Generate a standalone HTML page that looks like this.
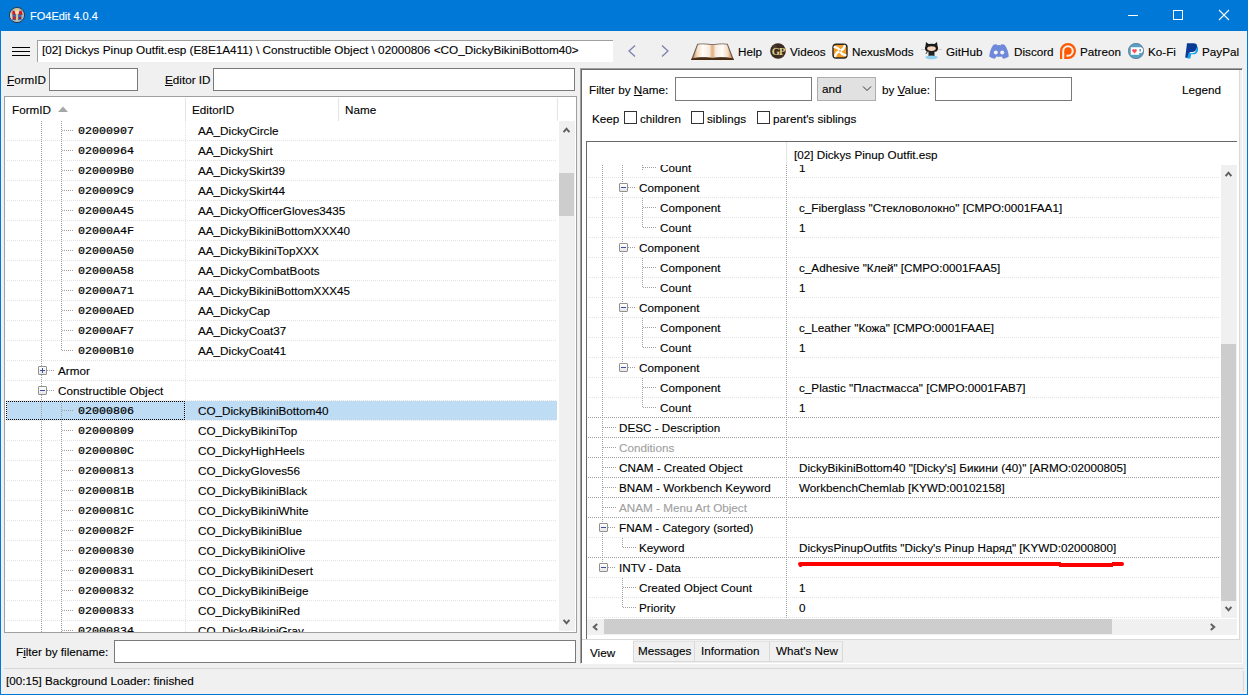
<!DOCTYPE html><html><head><meta charset="utf-8"><style>
html,body{margin:0;padding:0;}
body{width:1248px;height:695px;position:relative;overflow:hidden;background:#f0f0f0;font-family:"Liberation Sans",sans-serif;font-size:11.5px;}
.t{position:absolute;white-space:nowrap;line-height:0;height:0;}
.t span{position:relative;display:inline-block;line-height:0;}
.t span{-webkit-text-stroke:0.12px currentColor;}
.m span{-webkit-text-stroke:0.22px currentColor;}
u{text-decoration:underline;text-underline-offset:1px;}
</style></head><body><div style="position:absolute;left:0px;top:0px;width:1248px;height:31px;background:#0078d7"></div>
<div style="position:absolute;left:0px;top:0px;width:1px;height:695px;background:#0078d7"></div>
<div style="position:absolute;left:1247px;top:0px;width:1px;height:695px;background:#0078d7"></div>
<div style="position:absolute;left:0px;top:694px;width:1248px;height:1px;background:#0078d7"></div>
<svg style="position:absolute;left:9px;top:7px" width="16" height="16" viewBox="0 0 16 16">
<circle cx="8" cy="8" r="7.6" fill="#aab6bd" stroke="#2b3240" stroke-width="0.9"/>
<path d="M2 6.5Q1.5 9.5 3 12" stroke="#e8d8b8" stroke-width="1.6" fill="none"/>
<rect x="3.5" y="7" width="9" height="6" fill="#3c6fb5"/>
<path d="M3.5 3.5L6 4.5L6.2 8L3.5 7.5Z" fill="#e01515"/><path d="M10 4.5L12.5 3.5L13.5 8L10 7.5Z" fill="#e01515"/>
<path d="M4 9.5H6.5V12.5H4Z" fill="#e01515"/><path d="M10 10H12V12H10Z" fill="#c01010"/>
<rect x="7.2" y="6.5" width="1.6" height="7" fill="#f0e090"/>
<ellipse cx="8" cy="4.8" rx="2" ry="2.3" fill="#f3dcc0"/><ellipse cx="8" cy="2.6" rx="2.1" ry="1.2" fill="#e8d070"/>
</svg>
<div class="t" style="left:30px;top:16px;color:#fff;font-size:11px;font-family:'Liberation Sans', sans-serif;"><span>FO4Edit 4.0.4</span></div>
<div style="position:absolute;left:1128px;top:15px;width:10px;height:1px;background:#fff"></div>
<div style="position:absolute;left:1173px;top:10px;width:10px;height:10px;box-sizing:border-box;border:1px solid #fff"></div>
<svg style="position:absolute;left:1218px;top:9px" width="12" height="12" viewBox="0 0 12 12"><path d="M1 1L11 11M11 1L1 11" stroke="#fff" stroke-width="1.1"/></svg>
<div style="position:absolute;left:12px;top:47px;width:18px;height:1px;background:#000"></div>
<div style="position:absolute;left:12px;top:51px;width:18px;height:1px;background:#000"></div>
<div style="position:absolute;left:12px;top:55px;width:18px;height:1px;background:#000"></div>
<div style="position:absolute;left:37px;top:40px;width:576px;height:22px;background:#fff;border-top:1px solid #a0a0a0;border-left:1px solid #a0a0a0;box-sizing:border-box"></div>
<div class="t" style="left:42px;top:50px;color:#000;font-size:11.75px;font-family:'Liberation Sans', sans-serif;"><span>[02] Dickys Pinup Outfit.esp (E8E1A411) \ Constructible Object \ 02000806 &lt;CO_DickyBikiniBottom40&gt;</span></div>
<svg style="position:absolute;left:626px;top:44px" width="48" height="14" viewBox="0 0 48 14"><path d="M9 1.5L3 7L9 12.5" fill="none" stroke="#7d7fae" stroke-width="1.3"/><path d="M36 1.5L42 7L36 12.5" fill="none" stroke="#7d7fae" stroke-width="1.3"/></svg>
<svg style="position:absolute;left:691px;top:43px" width="43" height="17" viewBox="0 0 43 17">
<defs><linearGradient id="lp" x1="0" x2="1" y1="0" y2="0"><stop offset="0" stop-color="#d98f50"/><stop offset="0.22" stop-color="#f3dcc4"/><stop offset="0.5" stop-color="#fffcf8"/><stop offset="0.85" stop-color="#f7ece2"/><stop offset="1" stop-color="#e2b890"/></linearGradient>
<linearGradient id="rp" x1="1" x2="0" y1="0" y2="0"><stop offset="0" stop-color="#d98f50"/><stop offset="0.22" stop-color="#f3dcc4"/><stop offset="0.5" stop-color="#fffcf8"/><stop offset="0.85" stop-color="#f7ece2"/><stop offset="1" stop-color="#e2b890"/></linearGradient></defs>
<path d="M6.3 0.8Q14 -0.2 21.5 1.2Q29 -0.2 36.7 0.8L43 16.9H0Z" fill="#6a5a50"/>
<path d="M7 1.5Q14 0.8 21 2.1V14.4Q12 13.4 2.2 14.9Z" fill="url(#lp)"/>
<path d="M36 1.5Q29 0.8 22 2.1V14.4Q31 13.4 40.8 14.9Z" fill="url(#rp)"/>
<path d="M0.8 15.4Q11 13.9 21.5 15.3Q32 13.9 42.2 15.4L43 16.9H0Z" fill="#4a2c14"/>
<path d="M20.6 2.2Q21.5 1.6 22.4 2.2V14.8H20.6Z" fill="#e7b686"/>
</svg>
<div class="t" style="left:738px;top:52px;color:#000;font-size:11.7px;font-family:'Liberation Sans', sans-serif;"><span>Help</span></div>
<svg style="position:absolute;left:770px;top:43px" width="16" height="16" viewBox="0 0 16 16"><circle cx="8" cy="8" r="7.8" fill="#3a2a22"/><circle cx="5" cy="4" r="2" fill="#5a4030" opacity="0.7"/><circle cx="11" cy="12" r="2.5" fill="#4a3a2a" opacity="0.6"/><text x="8.2" y="11.9" font-family="Liberation Serif" font-size="10.5" font-weight="bold" fill="#e6d48a" text-anchor="middle" letter-spacing="-0.9">GP</text></svg>
<div class="t" style="left:790px;top:52px;color:#000;font-size:11.7px;font-family:'Liberation Sans', sans-serif;"><span>Videos</span></div>
<svg style="position:absolute;left:832px;top:43px" width="16" height="16" viewBox="0 0 16 16"><rect x="1" y="1.2" width="14" height="13.8" rx="3" fill="#f59e25" stroke="#2a2420" stroke-width="1.4"/>
<path d="M2.6 4.2Q6.5 4.5 7.6 7.6M12.6 2.8Q12 6.6 8.4 7.6M13.4 12.2Q9.5 11.8 8.4 8.4M3.2 13.2Q3.8 9.4 7.6 8.4" fill="none" stroke="#fff" stroke-width="2.3" stroke-linecap="round"/><circle cx="8" cy="8" r="0.9" fill="#f59e25"/></svg>
<div class="t" style="left:852px;top:52px;color:#000;font-size:11.7px;font-family:'Liberation Sans', sans-serif;"><span>NexusMods</span></div>
<svg style="position:absolute;left:920px;top:41px" width="23" height="19" viewBox="0 0 23 19">
<path d="M1 8.5H5M18 8.5H22" stroke="#c8c8c8" stroke-width="0.8"/>
<path d="M6 1L8.5 3Q11.5 2.3 14.5 3L17 1L17.5 5Q19 8 16.5 10.5Q11.5 12 6.5 10.5Q4 8 5.5 5Z" fill="#1a1a1a"/>
<ellipse cx="11.5" cy="7.6" rx="4.3" ry="2.3" fill="#f6d2b8"/>
<path d="M8.5 10.5H14.5V15.5H8.5Z" fill="#222"/><path d="M9 10Q6 11 6 13" stroke="#444" stroke-width="1" fill="none"/>
<ellipse cx="11.5" cy="16.3" rx="6.2" ry="1.9" fill="#8fd0f0"/>
</svg>
<div class="t" style="left:946px;top:52px;color:#000;font-size:11.7px;font-family:'Liberation Sans', sans-serif;"><span>GitHub</span></div>
<svg style="position:absolute;left:989px;top:44px" width="20" height="15" viewBox="0 0 20 15"><path d="M4.5 0.8Q7 0 8 0.6L8.3 1.2Q10 1 11.7 1.2L12 0.6Q13 0 15.5 0.8Q19 5 19.8 12.5Q17.5 14.5 14 14.8L12.8 12.5Q10 13.2 7.2 12.5L6 14.8Q2.5 14.5 0.2 12.5Q1 5 4.5 0.8Z" fill="#6e88da"/><circle cx="6.8" cy="8.4" r="2" fill="#f4f4f4"/><circle cx="13.2" cy="8.4" r="2" fill="#f4f4f4"/></svg>
<div class="t" style="left:1014px;top:52px;color:#000;font-size:11.7px;font-family:'Liberation Sans', sans-serif;"><span>Discord</span></div>
<svg style="position:absolute;left:1059px;top:42px" width="18" height="18" viewBox="0 0 18 18"><path d="M2.1 17V9A6.9 6.9 0 1 1 9 15.9H5.5" fill="none" stroke="#ff5900" stroke-width="2.2"/><circle cx="9" cy="9" r="3.7" fill="#ff5900"/><rect x="5.3" y="9" width="2.2" height="8" fill="#ff5900"/></svg>
<div class="t" style="left:1080px;top:52px;color:#000;font-size:11.7px;font-family:'Liberation Sans', sans-serif;"><span>Patreon</span></div>
<svg style="position:absolute;left:1128px;top:43px" width="16" height="16" viewBox="0 0 16 16"><circle cx="8" cy="8" r="7.7" fill="#59a0c6" stroke="#506070" stroke-width="0.6"/><path d="M2.8 4.3H12.5Q15 4.3 15 7.2Q15 10 12.3 10H11.2V11.8H2.8Z" fill="#fff"/><rect x="11.4" y="6" width="1.6" height="2.5" fill="#59a0c6"/><path d="M6.5 10.5L4.4 8.2Q3.5 6.8 4.8 6.2Q6 5.8 6.5 6.9Q7 5.8 8.2 6.2Q9.5 6.8 8.6 8.2Z" fill="#ff4e5c"/></svg>
<div class="t" style="left:1148px;top:52px;color:#000;font-size:11.7px;font-family:'Liberation Sans', sans-serif;"><span>Ko-Fi</span></div>
<svg style="position:absolute;left:1185px;top:43px" width="14" height="16" viewBox="0 0 14 16"><path d="M2 0.3H8.3Q12.8 0.3 12 4.6Q11.2 9 6.8 9H4.8L3.8 14.8H0.2Z" fill="#0a3a96"/><path d="M12.1 3.2Q13.7 4.5 13 7.4Q12 11.3 7.8 11.3H6.2L5.3 15.6H2.3L3.4 10.3H6.9Q11.5 10.3 12.1 3.2Z" fill="#0ea3e6"/></svg>
<div class="t" style="left:1202px;top:52px;color:#000;font-size:11.7px;font-family:'Liberation Sans', sans-serif;"><span>PayPal</span></div>
<div class="t" style="left:7px;top:80px;color:#000;font-size:11.7px;font-family:'Liberation Sans', sans-serif;"><span><u>F</u>ormID</span></div>
<div style="position:absolute;left:49px;top:68px;width:89px;height:23px;box-sizing:border-box;background:#fff;border:1px solid #7a7a7a"></div>
<div class="t" style="left:165px;top:80px;color:#000;font-size:11.7px;font-family:'Liberation Sans', sans-serif;"><span><u>E</u>ditor ID</span></div>
<div style="position:absolute;left:213px;top:68px;width:362px;height:23px;box-sizing:border-box;background:#fff;border:1px solid #7a7a7a"></div>
<div style="position:absolute;left:4px;top:96px;width:573px;height:537px;box-sizing:border-box;background:#fff;border:1px solid #a0a0a0"></div>
<div class="t" style="left:12px;top:110px;color:#000;font-size:11.7px;font-family:'Liberation Sans', sans-serif;"><span>FormID</span></div>
<svg style="position:absolute;left:58px;top:106px" width="10" height="6" viewBox="0 0 10 6"><path d="M0 6L5 0.5L10 6Z" fill="#a7a7a7"/></svg>
<div style="position:absolute;left:185px;top:98px;width:1px;height:23px;background:#e5e5e5"></div>
<div class="t" style="left:192px;top:110px;color:#000;font-size:11.7px;font-family:'Liberation Sans', sans-serif;"><span>EditorID</span></div>
<div style="position:absolute;left:338px;top:98px;width:1px;height:23px;background:#e5e5e5"></div>
<div class="t" style="left:345px;top:110px;color:#000;font-size:11.7px;font-family:'Liberation Sans', sans-serif;"><span>Name</span></div>
<div style="position:absolute;left:557px;top:98px;width:1px;height:23px;background:#e5e5e5"></div>
<div style="position:absolute;left:5px;top:121px;width:554px;height:511px;overflow:hidden">
<div style="position:absolute;left:2px;top:19px;width:550px;height:1px;background:repeating-linear-gradient(90deg,#e3e3e3 0 1px,transparent 1px 2px)"></div>
<div style="position:absolute;left:57px;top:9px;width:12px;height:1px;background:repeating-linear-gradient(90deg,#a0a0a0 0 1px,transparent 1px 2px)"></div>
<div class="t m" style="left:73px;top:10px;color:#000;font-size:11.7px;font-family:'Liberation Mono', monospace;"><span>02000907</span></div>
<div class="t" style="left:193px;top:10px;color:#000;font-size:11.7px;font-family:'Liberation Sans', sans-serif;"><span>AA_DickyCircle</span></div>
<div style="position:absolute;left:2px;top:39px;width:550px;height:1px;background:repeating-linear-gradient(90deg,#e3e3e3 0 1px,transparent 1px 2px)"></div>
<div style="position:absolute;left:57px;top:29px;width:12px;height:1px;background:repeating-linear-gradient(90deg,#a0a0a0 0 1px,transparent 1px 2px)"></div>
<div class="t m" style="left:73px;top:30px;color:#000;font-size:11.7px;font-family:'Liberation Mono', monospace;"><span>02000964</span></div>
<div class="t" style="left:193px;top:30px;color:#000;font-size:11.7px;font-family:'Liberation Sans', sans-serif;"><span>AA_DickyShirt</span></div>
<div style="position:absolute;left:2px;top:59px;width:550px;height:1px;background:repeating-linear-gradient(90deg,#e3e3e3 0 1px,transparent 1px 2px)"></div>
<div style="position:absolute;left:57px;top:49px;width:12px;height:1px;background:repeating-linear-gradient(90deg,#a0a0a0 0 1px,transparent 1px 2px)"></div>
<div class="t m" style="left:73px;top:50px;color:#000;font-size:11.7px;font-family:'Liberation Mono', monospace;"><span>020009B0</span></div>
<div class="t" style="left:193px;top:50px;color:#000;font-size:11.7px;font-family:'Liberation Sans', sans-serif;"><span>AA_DickySkirt39</span></div>
<div style="position:absolute;left:2px;top:79px;width:550px;height:1px;background:repeating-linear-gradient(90deg,#e3e3e3 0 1px,transparent 1px 2px)"></div>
<div style="position:absolute;left:57px;top:69px;width:12px;height:1px;background:repeating-linear-gradient(90deg,#a0a0a0 0 1px,transparent 1px 2px)"></div>
<div class="t m" style="left:73px;top:70px;color:#000;font-size:11.7px;font-family:'Liberation Mono', monospace;"><span>020009C9</span></div>
<div class="t" style="left:193px;top:70px;color:#000;font-size:11.7px;font-family:'Liberation Sans', sans-serif;"><span>AA_DickySkirt44</span></div>
<div style="position:absolute;left:2px;top:99px;width:550px;height:1px;background:repeating-linear-gradient(90deg,#e3e3e3 0 1px,transparent 1px 2px)"></div>
<div style="position:absolute;left:57px;top:89px;width:12px;height:1px;background:repeating-linear-gradient(90deg,#a0a0a0 0 1px,transparent 1px 2px)"></div>
<div class="t m" style="left:73px;top:90px;color:#000;font-size:11.7px;font-family:'Liberation Mono', monospace;"><span>02000A45</span></div>
<div class="t" style="left:193px;top:90px;color:#000;font-size:11.7px;font-family:'Liberation Sans', sans-serif;"><span>AA_DickyOfficerGloves3435</span></div>
<div style="position:absolute;left:2px;top:119px;width:550px;height:1px;background:repeating-linear-gradient(90deg,#e3e3e3 0 1px,transparent 1px 2px)"></div>
<div style="position:absolute;left:57px;top:109px;width:12px;height:1px;background:repeating-linear-gradient(90deg,#a0a0a0 0 1px,transparent 1px 2px)"></div>
<div class="t m" style="left:73px;top:110px;color:#000;font-size:11.7px;font-family:'Liberation Mono', monospace;"><span>02000A4F</span></div>
<div class="t" style="left:193px;top:110px;color:#000;font-size:11.7px;font-family:'Liberation Sans', sans-serif;"><span>AA_DickyBikiniBottomXXX40</span></div>
<div style="position:absolute;left:2px;top:139px;width:550px;height:1px;background:repeating-linear-gradient(90deg,#e3e3e3 0 1px,transparent 1px 2px)"></div>
<div style="position:absolute;left:57px;top:129px;width:12px;height:1px;background:repeating-linear-gradient(90deg,#a0a0a0 0 1px,transparent 1px 2px)"></div>
<div class="t m" style="left:73px;top:130px;color:#000;font-size:11.7px;font-family:'Liberation Mono', monospace;"><span>02000A50</span></div>
<div class="t" style="left:193px;top:130px;color:#000;font-size:11.7px;font-family:'Liberation Sans', sans-serif;"><span>AA_DickyBikiniTopXXX</span></div>
<div style="position:absolute;left:2px;top:159px;width:550px;height:1px;background:repeating-linear-gradient(90deg,#e3e3e3 0 1px,transparent 1px 2px)"></div>
<div style="position:absolute;left:57px;top:149px;width:12px;height:1px;background:repeating-linear-gradient(90deg,#a0a0a0 0 1px,transparent 1px 2px)"></div>
<div class="t m" style="left:73px;top:150px;color:#000;font-size:11.7px;font-family:'Liberation Mono', monospace;"><span>02000A58</span></div>
<div class="t" style="left:193px;top:150px;color:#000;font-size:11.7px;font-family:'Liberation Sans', sans-serif;"><span>AA_DickyCombatBoots</span></div>
<div style="position:absolute;left:2px;top:179px;width:550px;height:1px;background:repeating-linear-gradient(90deg,#e3e3e3 0 1px,transparent 1px 2px)"></div>
<div style="position:absolute;left:57px;top:169px;width:12px;height:1px;background:repeating-linear-gradient(90deg,#a0a0a0 0 1px,transparent 1px 2px)"></div>
<div class="t m" style="left:73px;top:170px;color:#000;font-size:11.7px;font-family:'Liberation Mono', monospace;"><span>02000A71</span></div>
<div class="t" style="left:193px;top:170px;color:#000;font-size:11.7px;font-family:'Liberation Sans', sans-serif;"><span>AA_DickyBikiniBottomXXX45</span></div>
<div style="position:absolute;left:2px;top:199px;width:550px;height:1px;background:repeating-linear-gradient(90deg,#e3e3e3 0 1px,transparent 1px 2px)"></div>
<div style="position:absolute;left:57px;top:189px;width:12px;height:1px;background:repeating-linear-gradient(90deg,#a0a0a0 0 1px,transparent 1px 2px)"></div>
<div class="t m" style="left:73px;top:190px;color:#000;font-size:11.7px;font-family:'Liberation Mono', monospace;"><span>02000AED</span></div>
<div class="t" style="left:193px;top:190px;color:#000;font-size:11.7px;font-family:'Liberation Sans', sans-serif;"><span>AA_DickyCap</span></div>
<div style="position:absolute;left:2px;top:219px;width:550px;height:1px;background:repeating-linear-gradient(90deg,#e3e3e3 0 1px,transparent 1px 2px)"></div>
<div style="position:absolute;left:57px;top:209px;width:12px;height:1px;background:repeating-linear-gradient(90deg,#a0a0a0 0 1px,transparent 1px 2px)"></div>
<div class="t m" style="left:73px;top:210px;color:#000;font-size:11.7px;font-family:'Liberation Mono', monospace;"><span>02000AF7</span></div>
<div class="t" style="left:193px;top:210px;color:#000;font-size:11.7px;font-family:'Liberation Sans', sans-serif;"><span>AA_DickyCoat37</span></div>
<div style="position:absolute;left:2px;top:239px;width:550px;height:1px;background:repeating-linear-gradient(90deg,#e3e3e3 0 1px,transparent 1px 2px)"></div>
<div style="position:absolute;left:57px;top:229px;width:12px;height:1px;background:repeating-linear-gradient(90deg,#a0a0a0 0 1px,transparent 1px 2px)"></div>
<div class="t m" style="left:73px;top:230px;color:#000;font-size:11.7px;font-family:'Liberation Mono', monospace;"><span>02000B10</span></div>
<div class="t" style="left:193px;top:230px;color:#000;font-size:11.7px;font-family:'Liberation Sans', sans-serif;"><span>AA_DickyCoat41</span></div>
<div style="position:absolute;left:2px;top:259px;width:550px;height:1px;background:repeating-linear-gradient(90deg,#e3e3e3 0 1px,transparent 1px 2px)"></div>
<div style="position:absolute;left:42px;top:249px;width:8px;height:1px;background:repeating-linear-gradient(90deg,#a0a0a0 0 1px,transparent 1px 2px)"></div>
<div class="t" style="left:53px;top:250px;color:#000;font-size:11.7px;font-family:'Liberation Sans', sans-serif;"><span>Armor</span></div>
<div style="position:absolute;left:2px;top:279px;width:550px;height:1px;background:repeating-linear-gradient(90deg,#e3e3e3 0 1px,transparent 1px 2px)"></div>
<div style="position:absolute;left:42px;top:269px;width:8px;height:1px;background:repeating-linear-gradient(90deg,#a0a0a0 0 1px,transparent 1px 2px)"></div>
<div class="t" style="left:53px;top:270px;color:#000;font-size:11.7px;font-family:'Liberation Sans', sans-serif;"><span>Constructible Object</span></div>
<div style="position:absolute;left:2px;top:280px;width:550px;height:19px;background:#bfdcf5"></div>
<div style="position:absolute;left:1px;top:280px;width:179px;height:19px;box-sizing:border-box;border:1px dotted #000"></div>
<div style="position:absolute;left:2px;top:299px;width:550px;height:1px;background:repeating-linear-gradient(90deg,#e3e3e3 0 1px,transparent 1px 2px)"></div>
<div style="position:absolute;left:57px;top:289px;width:12px;height:1px;background:repeating-linear-gradient(90deg,#a0a0a0 0 1px,transparent 1px 2px)"></div>
<div class="t m" style="left:73px;top:290px;color:#000;font-size:11.7px;font-family:'Liberation Mono', monospace;"><span>02000806</span></div>
<div class="t" style="left:193px;top:290px;color:#000;font-size:11.7px;font-family:'Liberation Sans', sans-serif;"><span>CO_DickyBikiniBottom40</span></div>
<div style="position:absolute;left:2px;top:319px;width:550px;height:1px;background:repeating-linear-gradient(90deg,#e3e3e3 0 1px,transparent 1px 2px)"></div>
<div style="position:absolute;left:57px;top:309px;width:12px;height:1px;background:repeating-linear-gradient(90deg,#a0a0a0 0 1px,transparent 1px 2px)"></div>
<div class="t m" style="left:73px;top:310px;color:#000;font-size:11.7px;font-family:'Liberation Mono', monospace;"><span>02000809</span></div>
<div class="t" style="left:193px;top:310px;color:#000;font-size:11.7px;font-family:'Liberation Sans', sans-serif;"><span>CO_DickyBikiniTop</span></div>
<div style="position:absolute;left:2px;top:339px;width:550px;height:1px;background:repeating-linear-gradient(90deg,#e3e3e3 0 1px,transparent 1px 2px)"></div>
<div style="position:absolute;left:57px;top:329px;width:12px;height:1px;background:repeating-linear-gradient(90deg,#a0a0a0 0 1px,transparent 1px 2px)"></div>
<div class="t m" style="left:73px;top:330px;color:#000;font-size:11.7px;font-family:'Liberation Mono', monospace;"><span>0200080C</span></div>
<div class="t" style="left:193px;top:330px;color:#000;font-size:11.7px;font-family:'Liberation Sans', sans-serif;"><span>CO_DickyHighHeels</span></div>
<div style="position:absolute;left:2px;top:359px;width:550px;height:1px;background:repeating-linear-gradient(90deg,#e3e3e3 0 1px,transparent 1px 2px)"></div>
<div style="position:absolute;left:57px;top:349px;width:12px;height:1px;background:repeating-linear-gradient(90deg,#a0a0a0 0 1px,transparent 1px 2px)"></div>
<div class="t m" style="left:73px;top:350px;color:#000;font-size:11.7px;font-family:'Liberation Mono', monospace;"><span>02000813</span></div>
<div class="t" style="left:193px;top:350px;color:#000;font-size:11.7px;font-family:'Liberation Sans', sans-serif;"><span>CO_DickyGloves56</span></div>
<div style="position:absolute;left:2px;top:379px;width:550px;height:1px;background:repeating-linear-gradient(90deg,#e3e3e3 0 1px,transparent 1px 2px)"></div>
<div style="position:absolute;left:57px;top:369px;width:12px;height:1px;background:repeating-linear-gradient(90deg,#a0a0a0 0 1px,transparent 1px 2px)"></div>
<div class="t m" style="left:73px;top:370px;color:#000;font-size:11.7px;font-family:'Liberation Mono', monospace;"><span>0200081B</span></div>
<div class="t" style="left:193px;top:370px;color:#000;font-size:11.7px;font-family:'Liberation Sans', sans-serif;"><span>CO_DickyBikiniBlack</span></div>
<div style="position:absolute;left:2px;top:399px;width:550px;height:1px;background:repeating-linear-gradient(90deg,#e3e3e3 0 1px,transparent 1px 2px)"></div>
<div style="position:absolute;left:57px;top:389px;width:12px;height:1px;background:repeating-linear-gradient(90deg,#a0a0a0 0 1px,transparent 1px 2px)"></div>
<div class="t m" style="left:73px;top:390px;color:#000;font-size:11.7px;font-family:'Liberation Mono', monospace;"><span>0200081C</span></div>
<div class="t" style="left:193px;top:390px;color:#000;font-size:11.7px;font-family:'Liberation Sans', sans-serif;"><span>CO_DickyBikiniWhite</span></div>
<div style="position:absolute;left:2px;top:419px;width:550px;height:1px;background:repeating-linear-gradient(90deg,#e3e3e3 0 1px,transparent 1px 2px)"></div>
<div style="position:absolute;left:57px;top:409px;width:12px;height:1px;background:repeating-linear-gradient(90deg,#a0a0a0 0 1px,transparent 1px 2px)"></div>
<div class="t m" style="left:73px;top:410px;color:#000;font-size:11.7px;font-family:'Liberation Mono', monospace;"><span>0200082F</span></div>
<div class="t" style="left:193px;top:410px;color:#000;font-size:11.7px;font-family:'Liberation Sans', sans-serif;"><span>CO_DickyBikiniBlue</span></div>
<div style="position:absolute;left:2px;top:439px;width:550px;height:1px;background:repeating-linear-gradient(90deg,#e3e3e3 0 1px,transparent 1px 2px)"></div>
<div style="position:absolute;left:57px;top:429px;width:12px;height:1px;background:repeating-linear-gradient(90deg,#a0a0a0 0 1px,transparent 1px 2px)"></div>
<div class="t m" style="left:73px;top:430px;color:#000;font-size:11.7px;font-family:'Liberation Mono', monospace;"><span>02000830</span></div>
<div class="t" style="left:193px;top:430px;color:#000;font-size:11.7px;font-family:'Liberation Sans', sans-serif;"><span>CO_DickyBikiniOlive</span></div>
<div style="position:absolute;left:2px;top:459px;width:550px;height:1px;background:repeating-linear-gradient(90deg,#e3e3e3 0 1px,transparent 1px 2px)"></div>
<div style="position:absolute;left:57px;top:449px;width:12px;height:1px;background:repeating-linear-gradient(90deg,#a0a0a0 0 1px,transparent 1px 2px)"></div>
<div class="t m" style="left:73px;top:450px;color:#000;font-size:11.7px;font-family:'Liberation Mono', monospace;"><span>02000831</span></div>
<div class="t" style="left:193px;top:450px;color:#000;font-size:11.7px;font-family:'Liberation Sans', sans-serif;"><span>CO_DickyBikiniDesert</span></div>
<div style="position:absolute;left:2px;top:479px;width:550px;height:1px;background:repeating-linear-gradient(90deg,#e3e3e3 0 1px,transparent 1px 2px)"></div>
<div style="position:absolute;left:57px;top:469px;width:12px;height:1px;background:repeating-linear-gradient(90deg,#a0a0a0 0 1px,transparent 1px 2px)"></div>
<div class="t m" style="left:73px;top:470px;color:#000;font-size:11.7px;font-family:'Liberation Mono', monospace;"><span>02000832</span></div>
<div class="t" style="left:193px;top:470px;color:#000;font-size:11.7px;font-family:'Liberation Sans', sans-serif;"><span>CO_DickyBikiniBeige</span></div>
<div style="position:absolute;left:2px;top:499px;width:550px;height:1px;background:repeating-linear-gradient(90deg,#e3e3e3 0 1px,transparent 1px 2px)"></div>
<div style="position:absolute;left:57px;top:489px;width:12px;height:1px;background:repeating-linear-gradient(90deg,#a0a0a0 0 1px,transparent 1px 2px)"></div>
<div class="t m" style="left:73px;top:490px;color:#000;font-size:11.7px;font-family:'Liberation Mono', monospace;"><span>02000833</span></div>
<div class="t" style="left:193px;top:490px;color:#000;font-size:11.7px;font-family:'Liberation Sans', sans-serif;"><span>CO_DickyBikiniRed</span></div>
<div style="position:absolute;left:2px;top:519px;width:550px;height:1px;background:repeating-linear-gradient(90deg,#e3e3e3 0 1px,transparent 1px 2px)"></div>
<div style="position:absolute;left:57px;top:509px;width:12px;height:1px;background:repeating-linear-gradient(90deg,#a0a0a0 0 1px,transparent 1px 2px)"></div>
<div class="t m" style="left:73px;top:510px;color:#000;font-size:11.7px;font-family:'Liberation Mono', monospace;"><span>02000834</span></div>
<div class="t" style="left:193px;top:510px;color:#000;font-size:11.7px;font-family:'Liberation Sans', sans-serif;"><span>CO_DickyBikiniGray</span></div>
<div style="position:absolute;left:180px;top:0px;width:1px;height:511px;background:repeating-linear-gradient(180deg,#e3e3e3 0 1px,transparent 1px 2px)"></div>
<div style="position:absolute;left:36px;top:0px;width:1px;height:511px;background:repeating-linear-gradient(180deg,#a0a0a0 0 1px,transparent 1px 2px)"></div>
<div style="position:absolute;left:56px;top:0px;width:1px;height:230px;background:repeating-linear-gradient(180deg,#a0a0a0 0 1px,transparent 1px 2px)"></div>
<div style="position:absolute;left:56px;top:280px;width:1px;height:231px;background:repeating-linear-gradient(180deg,#a0a0a0 0 1px,transparent 1px 2px)"></div>
<div style="position:absolute;left:33px;top:245px;width:9px;height:9px;box-sizing:border-box;border:1px solid #919191;border-radius:1px;background:linear-gradient(#fff,#e6e6e6)"></div>
<div style="position:absolute;left:35px;top:249px;width:5px;height:1px;background:#3e4ea0"></div>
<div style="position:absolute;left:37px;top:247px;width:1px;height:5px;background:#3e4ea0"></div>
<div style="position:absolute;left:33px;top:265px;width:9px;height:9px;box-sizing:border-box;border:1px solid #919191;border-radius:1px;background:linear-gradient(#fff,#e6e6e6)"></div>
<div style="position:absolute;left:35px;top:269px;width:5px;height:1px;background:#3e4ea0"></div>
</div>
<div style="position:absolute;left:559px;top:121px;width:16px;height:510px;background:#f0f0f0"></div>
<div style="position:absolute;left:559px;top:173px;width:15px;height:43px;background:#cdcdcd"></div>
<svg style="position:absolute;left:559px;top:121px" width="16" height="17" viewBox="0 0 16 17"><path d="M4.6 11.2L7.5 7.7L10.4 11.2" fill="none" stroke="#606060" stroke-width="2"/></svg>
<svg style="position:absolute;left:559px;top:614px" width="16" height="17" viewBox="0 0 16 17"><path d="M4.6 5.8L7.5 9.3L10.4 5.8" fill="none" stroke="#606060" stroke-width="2"/></svg>
<div class="t" style="left:16px;top:652px;color:#000;font-size:11.7px;font-family:'Liberation Sans', sans-serif;"><span>F<u>i</u>lter by filename:</span></div>
<div style="position:absolute;left:114px;top:640px;width:462px;height:23px;box-sizing:border-box;background:#fff;border:1px solid #7a7a7a"></div>
<div style="position:absolute;left:4px;top:668px;width:1240px;height:1px;background:#d7d7d7"></div>
<div style="position:absolute;left:1243px;top:671px;width:1px;height:20px;background:#d7d7d7"></div>
<div class="t" style="left:6px;top:681px;color:#000;font-size:11.7px;font-family:'Liberation Sans', sans-serif;"><span>[00:15] Background Loader: finished</span></div>
<div style="position:absolute;left:580px;top:68px;width:663px;height:596px;box-sizing:border-box;background:#f0f0f0;border-left:1px solid #a0a0a0;border-top:1px solid #a0a0a0;border-right:1px solid #fff;border-bottom:1px solid #fff"></div>
<div style="position:absolute;left:581px;top:69px;width:661px;height:594px;box-sizing:border-box;border-left:1px solid #696969;border-top:1px solid #696969"></div>
<div style="position:absolute;left:582px;top:70px;width:658px;height:570px;box-sizing:border-box;background:#fff;border-right:1px solid #d9d9d9;border-bottom:1px solid #d9d9d9"></div>
<div class="t" style="left:589px;top:90px;color:#000;font-size:11.7px;font-family:'Liberation Sans', sans-serif;"><span>Filter by <u>N</u>ame:</span></div>
<div style="position:absolute;left:675px;top:77px;width:137px;height:24px;box-sizing:border-box;background:#fff;border:1px solid #7a7a7a"></div>
<div style="position:absolute;left:817px;top:77px;width:59px;height:24px;box-sizing:border-box;background:#e1e1e1;border:1px solid #adadad"></div>
<div class="t" style="left:822px;top:89px;color:#000;font-size:11.7px;font-family:'Liberation Sans', sans-serif;"><span>and</span></div>
<svg style="position:absolute;left:862px;top:85px" width="10" height="7" viewBox="0 0 10 7"><path d="M1 1.5L5 5.5L9 1.5" fill="none" stroke="#333" stroke-width="1"/></svg>
<div class="t" style="left:882px;top:90px;color:#000;font-size:11.7px;font-family:'Liberation Sans', sans-serif;"><span>by <u>V</u>alue:</span></div>
<div style="position:absolute;left:935px;top:77px;width:137px;height:24px;box-sizing:border-box;background:#fff;border:1px solid #7a7a7a"></div>
<div class="t" style="left:1182px;top:90px;color:#000;font-size:11.7px;font-family:'Liberation Sans', sans-serif;"><span>Legend</span></div>
<div class="t" style="left:592px;top:119px;color:#000;font-size:11.7px;font-family:'Liberation Sans', sans-serif;"><span>Keep</span></div>
<div style="position:absolute;left:624px;top:111px;width:13px;height:13px;box-sizing:border-box;background:#fff;border:1px solid #333"></div>
<div class="t" style="left:640px;top:119px;color:#000;font-size:11.7px;font-family:'Liberation Sans', sans-serif;"><span>children</span></div>
<div style="position:absolute;left:691px;top:111px;width:13px;height:13px;box-sizing:border-box;background:#fff;border:1px solid #333"></div>
<div class="t" style="left:707px;top:119px;color:#000;font-size:11.7px;font-family:'Liberation Sans', sans-serif;"><span>siblings</span></div>
<div style="position:absolute;left:757px;top:111px;width:13px;height:13px;box-sizing:border-box;background:#fff;border:1px solid #333"></div>
<div class="t" style="left:773px;top:119px;color:#000;font-size:11.7px;font-family:'Liberation Sans', sans-serif;"><span>parent's siblings</span></div>
<div style="position:absolute;left:586px;top:141px;width:651px;height:498px;box-sizing:border-box;background:#fff;border-top:1px solid #696969;border-left:1px solid #696969"></div>
<div style="position:absolute;left:786px;top:142px;width:1px;height:23px;background:#e5e5e5"></div>
<div class="t" style="left:794px;top:155px;color:#000;font-size:11.7px;font-family:'Liberation Sans', sans-serif;"><span>[02] Dickys Pinup Outfit.esp</span></div>
<div style="position:absolute;left:587px;top:165px;width:634px;height:453px;overflow:hidden">
<div style="position:absolute;left:1px;top:12px;width:631px;height:1px;background:repeating-linear-gradient(90deg,#e3e3e3 0 1px,transparent 1px 2px)"></div>
<div style="position:absolute;left:56px;top:2px;width:13px;height:1px;background:repeating-linear-gradient(90deg,#a0a0a0 0 1px,transparent 1px 2px)"></div>
<div class="t" style="left:73px;top:3px;color:#000;font-size:11.7px;font-family:'Liberation Sans', sans-serif;"><span>Count</span></div>
<div class="t" style="left:212px;top:3px;color:#000;font-size:11.7px;font-family:'Liberation Sans', sans-serif;"><span>1</span></div>
<div style="position:absolute;left:1px;top:32px;width:631px;height:1px;background:repeating-linear-gradient(90deg,#e3e3e3 0 1px,transparent 1px 2px)"></div>
<div style="position:absolute;left:41px;top:22px;width:7px;height:1px;background:repeating-linear-gradient(90deg,#a0a0a0 0 1px,transparent 1px 2px)"></div>
<div class="t" style="left:52px;top:23px;color:#000;font-size:11.7px;font-family:'Liberation Sans', sans-serif;"><span>Component</span></div>
<div style="position:absolute;left:1px;top:52px;width:631px;height:1px;background:repeating-linear-gradient(90deg,#e3e3e3 0 1px,transparent 1px 2px)"></div>
<div style="position:absolute;left:56px;top:42px;width:13px;height:1px;background:repeating-linear-gradient(90deg,#a0a0a0 0 1px,transparent 1px 2px)"></div>
<div class="t" style="left:73px;top:43px;color:#000;font-size:11.7px;font-family:'Liberation Sans', sans-serif;"><span>Component</span></div>
<div class="t" style="left:212px;top:43px;color:#000;font-size:11.7px;font-family:'Liberation Sans', sans-serif;"><span>c_Fiberglass "Стекловолокно" [CMPO:0001FAA1]</span></div>
<div style="position:absolute;left:1px;top:72px;width:631px;height:1px;background:repeating-linear-gradient(90deg,#e3e3e3 0 1px,transparent 1px 2px)"></div>
<div style="position:absolute;left:56px;top:62px;width:13px;height:1px;background:repeating-linear-gradient(90deg,#a0a0a0 0 1px,transparent 1px 2px)"></div>
<div class="t" style="left:73px;top:63px;color:#000;font-size:11.7px;font-family:'Liberation Sans', sans-serif;"><span>Count</span></div>
<div class="t" style="left:212px;top:63px;color:#000;font-size:11.7px;font-family:'Liberation Sans', sans-serif;"><span>1</span></div>
<div style="position:absolute;left:1px;top:92px;width:631px;height:1px;background:repeating-linear-gradient(90deg,#e3e3e3 0 1px,transparent 1px 2px)"></div>
<div style="position:absolute;left:41px;top:82px;width:7px;height:1px;background:repeating-linear-gradient(90deg,#a0a0a0 0 1px,transparent 1px 2px)"></div>
<div class="t" style="left:52px;top:83px;color:#000;font-size:11.7px;font-family:'Liberation Sans', sans-serif;"><span>Component</span></div>
<div style="position:absolute;left:1px;top:112px;width:631px;height:1px;background:repeating-linear-gradient(90deg,#e3e3e3 0 1px,transparent 1px 2px)"></div>
<div style="position:absolute;left:56px;top:102px;width:13px;height:1px;background:repeating-linear-gradient(90deg,#a0a0a0 0 1px,transparent 1px 2px)"></div>
<div class="t" style="left:73px;top:103px;color:#000;font-size:11.7px;font-family:'Liberation Sans', sans-serif;"><span>Component</span></div>
<div class="t" style="left:212px;top:103px;color:#000;font-size:11.7px;font-family:'Liberation Sans', sans-serif;"><span>c_Adhesive "Клей" [CMPO:0001FAA5]</span></div>
<div style="position:absolute;left:1px;top:132px;width:631px;height:1px;background:repeating-linear-gradient(90deg,#e3e3e3 0 1px,transparent 1px 2px)"></div>
<div style="position:absolute;left:56px;top:122px;width:13px;height:1px;background:repeating-linear-gradient(90deg,#a0a0a0 0 1px,transparent 1px 2px)"></div>
<div class="t" style="left:73px;top:123px;color:#000;font-size:11.7px;font-family:'Liberation Sans', sans-serif;"><span>Count</span></div>
<div class="t" style="left:212px;top:123px;color:#000;font-size:11.7px;font-family:'Liberation Sans', sans-serif;"><span>1</span></div>
<div style="position:absolute;left:1px;top:152px;width:631px;height:1px;background:repeating-linear-gradient(90deg,#e3e3e3 0 1px,transparent 1px 2px)"></div>
<div style="position:absolute;left:41px;top:142px;width:7px;height:1px;background:repeating-linear-gradient(90deg,#a0a0a0 0 1px,transparent 1px 2px)"></div>
<div class="t" style="left:52px;top:143px;color:#000;font-size:11.7px;font-family:'Liberation Sans', sans-serif;"><span>Component</span></div>
<div style="position:absolute;left:1px;top:172px;width:631px;height:1px;background:repeating-linear-gradient(90deg,#e3e3e3 0 1px,transparent 1px 2px)"></div>
<div style="position:absolute;left:56px;top:162px;width:13px;height:1px;background:repeating-linear-gradient(90deg,#a0a0a0 0 1px,transparent 1px 2px)"></div>
<div class="t" style="left:73px;top:163px;color:#000;font-size:11.7px;font-family:'Liberation Sans', sans-serif;"><span>Component</span></div>
<div class="t" style="left:212px;top:163px;color:#000;font-size:11.7px;font-family:'Liberation Sans', sans-serif;"><span>c_Leather "Кожа" [CMPO:0001FAAE]</span></div>
<div style="position:absolute;left:1px;top:192px;width:631px;height:1px;background:repeating-linear-gradient(90deg,#e3e3e3 0 1px,transparent 1px 2px)"></div>
<div style="position:absolute;left:56px;top:182px;width:13px;height:1px;background:repeating-linear-gradient(90deg,#a0a0a0 0 1px,transparent 1px 2px)"></div>
<div class="t" style="left:73px;top:183px;color:#000;font-size:11.7px;font-family:'Liberation Sans', sans-serif;"><span>Count</span></div>
<div class="t" style="left:212px;top:183px;color:#000;font-size:11.7px;font-family:'Liberation Sans', sans-serif;"><span>1</span></div>
<div style="position:absolute;left:1px;top:212px;width:631px;height:1px;background:repeating-linear-gradient(90deg,#e3e3e3 0 1px,transparent 1px 2px)"></div>
<div style="position:absolute;left:41px;top:202px;width:7px;height:1px;background:repeating-linear-gradient(90deg,#a0a0a0 0 1px,transparent 1px 2px)"></div>
<div class="t" style="left:52px;top:203px;color:#000;font-size:11.7px;font-family:'Liberation Sans', sans-serif;"><span>Component</span></div>
<div style="position:absolute;left:1px;top:232px;width:631px;height:1px;background:repeating-linear-gradient(90deg,#e3e3e3 0 1px,transparent 1px 2px)"></div>
<div style="position:absolute;left:56px;top:222px;width:13px;height:1px;background:repeating-linear-gradient(90deg,#a0a0a0 0 1px,transparent 1px 2px)"></div>
<div class="t" style="left:73px;top:223px;color:#000;font-size:11.7px;font-family:'Liberation Sans', sans-serif;"><span>Component</span></div>
<div class="t" style="left:212px;top:223px;color:#000;font-size:11.7px;font-family:'Liberation Sans', sans-serif;"><span>c_Plastic "Пластмасса" [CMPO:0001FAB7]</span></div>
<div style="position:absolute;left:1px;top:252px;width:631px;height:1px;background:repeating-linear-gradient(90deg,#a0a0a0 0 1px,transparent 1px 2px)"></div>
<div style="position:absolute;left:56px;top:242px;width:13px;height:1px;background:repeating-linear-gradient(90deg,#a0a0a0 0 1px,transparent 1px 2px)"></div>
<div class="t" style="left:73px;top:243px;color:#000;font-size:11.7px;font-family:'Liberation Sans', sans-serif;"><span>Count</span></div>
<div class="t" style="left:212px;top:243px;color:#000;font-size:11.7px;font-family:'Liberation Sans', sans-serif;"><span>1</span></div>
<div style="position:absolute;left:1px;top:272px;width:631px;height:1px;background:repeating-linear-gradient(90deg,#a0a0a0 0 1px,transparent 1px 2px)"></div>
<div style="position:absolute;left:16px;top:262px;width:13px;height:1px;background:repeating-linear-gradient(90deg,#a0a0a0 0 1px,transparent 1px 2px)"></div>
<div class="t" style="left:32px;top:263px;color:#000;font-size:11.7px;font-family:'Liberation Sans', sans-serif;"><span>DESC - Description</span></div>
<div style="position:absolute;left:1px;top:292px;width:631px;height:1px;background:repeating-linear-gradient(90deg,#a0a0a0 0 1px,transparent 1px 2px)"></div>
<div style="position:absolute;left:16px;top:282px;width:13px;height:1px;background:repeating-linear-gradient(90deg,#a0a0a0 0 1px,transparent 1px 2px)"></div>
<div class="t" style="left:32px;top:283px;color:#000;font-size:11.7px;font-family:'Liberation Sans', sans-serif;"><span><span style="color:#a0a0a0">Conditions</span></span></div>
<div style="position:absolute;left:1px;top:312px;width:631px;height:1px;background:repeating-linear-gradient(90deg,#a0a0a0 0 1px,transparent 1px 2px)"></div>
<div style="position:absolute;left:16px;top:302px;width:13px;height:1px;background:repeating-linear-gradient(90deg,#a0a0a0 0 1px,transparent 1px 2px)"></div>
<div class="t" style="left:32px;top:303px;color:#000;font-size:11.7px;font-family:'Liberation Sans', sans-serif;"><span>CNAM - Created Object</span></div>
<div class="t" style="left:212px;top:303px;color:#000;font-size:11.7px;font-family:'Liberation Sans', sans-serif;"><span>DickyBikiniBottom40 "[Dicky's] Бикини (40)" [ARMO:02000805]</span></div>
<div style="position:absolute;left:1px;top:332px;width:631px;height:1px;background:repeating-linear-gradient(90deg,#a0a0a0 0 1px,transparent 1px 2px)"></div>
<div style="position:absolute;left:16px;top:322px;width:13px;height:1px;background:repeating-linear-gradient(90deg,#a0a0a0 0 1px,transparent 1px 2px)"></div>
<div class="t" style="left:32px;top:323px;color:#000;font-size:11.7px;font-family:'Liberation Sans', sans-serif;"><span>BNAM - Workbench Keyword</span></div>
<div class="t" style="left:212px;top:323px;color:#000;font-size:11.7px;font-family:'Liberation Sans', sans-serif;"><span>WorkbenchChemlab [KYWD:00102158]</span></div>
<div style="position:absolute;left:1px;top:352px;width:631px;height:1px;background:repeating-linear-gradient(90deg,#a0a0a0 0 1px,transparent 1px 2px)"></div>
<div style="position:absolute;left:16px;top:342px;width:13px;height:1px;background:repeating-linear-gradient(90deg,#a0a0a0 0 1px,transparent 1px 2px)"></div>
<div class="t" style="left:32px;top:343px;color:#000;font-size:11.7px;font-family:'Liberation Sans', sans-serif;"><span><span style="color:#a0a0a0">ANAM - Menu Art Object</span></span></div>
<div style="position:absolute;left:1px;top:372px;width:631px;height:1px;background:repeating-linear-gradient(90deg,#e3e3e3 0 1px,transparent 1px 2px)"></div>
<div style="position:absolute;left:21px;top:362px;width:7px;height:1px;background:repeating-linear-gradient(90deg,#a0a0a0 0 1px,transparent 1px 2px)"></div>
<div class="t" style="left:32px;top:363px;color:#000;font-size:11.7px;font-family:'Liberation Sans', sans-serif;"><span>FNAM - Category (sorted)</span></div>
<div style="position:absolute;left:1px;top:392px;width:631px;height:1px;background:repeating-linear-gradient(90deg,#a0a0a0 0 1px,transparent 1px 2px)"></div>
<div style="position:absolute;left:36px;top:382px;width:13px;height:1px;background:repeating-linear-gradient(90deg,#a0a0a0 0 1px,transparent 1px 2px)"></div>
<div class="t" style="left:52px;top:383px;color:#000;font-size:11.7px;font-family:'Liberation Sans', sans-serif;"><span>Keyword</span></div>
<div class="t" style="left:212px;top:383px;color:#000;font-size:11.7px;font-family:'Liberation Sans', sans-serif;"><span>DickysPinupOutfits "Dicky's Pinup Наряд" [KYWD:02000800]</span></div>
<div style="position:absolute;left:1px;top:412px;width:631px;height:1px;background:repeating-linear-gradient(90deg,#e3e3e3 0 1px,transparent 1px 2px)"></div>
<div style="position:absolute;left:21px;top:402px;width:7px;height:1px;background:repeating-linear-gradient(90deg,#a0a0a0 0 1px,transparent 1px 2px)"></div>
<div class="t" style="left:32px;top:403px;color:#000;font-size:11.7px;font-family:'Liberation Sans', sans-serif;"><span>INTV - Data</span></div>
<div style="position:absolute;left:1px;top:432px;width:631px;height:1px;background:repeating-linear-gradient(90deg,#e3e3e3 0 1px,transparent 1px 2px)"></div>
<div style="position:absolute;left:36px;top:422px;width:13px;height:1px;background:repeating-linear-gradient(90deg,#a0a0a0 0 1px,transparent 1px 2px)"></div>
<div class="t" style="left:52px;top:423px;color:#000;font-size:11.7px;font-family:'Liberation Sans', sans-serif;"><span>Created Object Count</span></div>
<div class="t" style="left:212px;top:423px;color:#000;font-size:11.7px;font-family:'Liberation Sans', sans-serif;"><span>1</span></div>
<div style="position:absolute;left:1px;top:452px;width:631px;height:1px;background:repeating-linear-gradient(90deg,#e3e3e3 0 1px,transparent 1px 2px)"></div>
<div style="position:absolute;left:36px;top:442px;width:13px;height:1px;background:repeating-linear-gradient(90deg,#a0a0a0 0 1px,transparent 1px 2px)"></div>
<div class="t" style="left:52px;top:443px;color:#000;font-size:11.7px;font-family:'Liberation Sans', sans-serif;"><span>Priority</span></div>
<div class="t" style="left:212px;top:443px;color:#000;font-size:11.7px;font-family:'Liberation Sans', sans-serif;"><span>0</span></div>
<div style="position:absolute;left:199px;top:0px;width:1px;height:453px;background:repeating-linear-gradient(180deg,#a0a0a0 0 1px,transparent 1px 2px)"></div>
<div style="position:absolute;left:15px;top:0px;width:1px;height:402px;background:repeating-linear-gradient(180deg,#a0a0a0 0 1px,transparent 1px 2px)"></div>
<div style="position:absolute;left:35px;top:0px;width:1px;height:203px;background:repeating-linear-gradient(180deg,#a0a0a0 0 1px,transparent 1px 2px)"></div>
<div style="position:absolute;left:55px;top:33px;width:1px;height:30px;background:repeating-linear-gradient(180deg,#a0a0a0 0 1px,transparent 1px 2px)"></div>
<div style="position:absolute;left:55px;top:93px;width:1px;height:30px;background:repeating-linear-gradient(180deg,#a0a0a0 0 1px,transparent 1px 2px)"></div>
<div style="position:absolute;left:55px;top:153px;width:1px;height:30px;background:repeating-linear-gradient(180deg,#a0a0a0 0 1px,transparent 1px 2px)"></div>
<div style="position:absolute;left:55px;top:213px;width:1px;height:30px;background:repeating-linear-gradient(180deg,#a0a0a0 0 1px,transparent 1px 2px)"></div>
<div style="position:absolute;left:55px;top:0px;width:1px;height:6px;background:repeating-linear-gradient(180deg,#a0a0a0 0 1px,transparent 1px 2px)"></div>
<div style="position:absolute;left:35px;top:373px;width:1px;height:10px;background:repeating-linear-gradient(180deg,#a0a0a0 0 1px,transparent 1px 2px)"></div>
<div style="position:absolute;left:35px;top:413px;width:1px;height:30px;background:repeating-linear-gradient(180deg,#a0a0a0 0 1px,transparent 1px 2px)"></div>
<div style="position:absolute;left:32px;top:18px;width:9px;height:9px;box-sizing:border-box;border:1px solid #919191;border-radius:1px;background:linear-gradient(#fff,#e6e6e6)"></div>
<div style="position:absolute;left:34px;top:22px;width:5px;height:1px;background:#3e4ea0"></div>
<div style="position:absolute;left:32px;top:78px;width:9px;height:9px;box-sizing:border-box;border:1px solid #919191;border-radius:1px;background:linear-gradient(#fff,#e6e6e6)"></div>
<div style="position:absolute;left:34px;top:82px;width:5px;height:1px;background:#3e4ea0"></div>
<div style="position:absolute;left:32px;top:138px;width:9px;height:9px;box-sizing:border-box;border:1px solid #919191;border-radius:1px;background:linear-gradient(#fff,#e6e6e6)"></div>
<div style="position:absolute;left:34px;top:142px;width:5px;height:1px;background:#3e4ea0"></div>
<div style="position:absolute;left:32px;top:198px;width:9px;height:9px;box-sizing:border-box;border:1px solid #919191;border-radius:1px;background:linear-gradient(#fff,#e6e6e6)"></div>
<div style="position:absolute;left:34px;top:202px;width:5px;height:1px;background:#3e4ea0"></div>
<div style="position:absolute;left:12px;top:358px;width:9px;height:9px;box-sizing:border-box;border:1px solid #919191;border-radius:1px;background:linear-gradient(#fff,#e6e6e6)"></div>
<div style="position:absolute;left:14px;top:362px;width:5px;height:1px;background:#3e4ea0"></div>
<div style="position:absolute;left:12px;top:398px;width:9px;height:9px;box-sizing:border-box;border:1px solid #919191;border-radius:1px;background:linear-gradient(#fff,#e6e6e6)"></div>
<div style="position:absolute;left:14px;top:402px;width:5px;height:1px;background:#3e4ea0"></div>
</div>
<div style="position:absolute;left:798px;top:562px;width:263px;height:4px;background:#ff0000;border-radius:2px 0 0 2px"></div>
<div style="position:absolute;left:799px;top:565px;width:3px;height:2px;background:#ff0000;border-radius:1px"></div>
<div style="position:absolute;left:1059px;top:563px;width:54px;height:4px;background:#ff0000"></div>
<div style="position:absolute;left:1112px;top:562px;width:12px;height:4px;background:#ff0000;border-radius:0 2px 2px 0"></div>
<div style="position:absolute;left:1221px;top:165px;width:16px;height:453px;background:#f0f0f0"></div>
<div style="position:absolute;left:1221px;top:344px;width:15px;height:257px;background:#cdcdcd"></div>
<svg style="position:absolute;left:1221px;top:165px" width="16" height="17" viewBox="0 0 16 17"><path d="M4.6 11.2L7.5 7.7L10.4 11.2" fill="none" stroke="#606060" stroke-width="2"/></svg>
<svg style="position:absolute;left:1221px;top:601px" width="16" height="17" viewBox="0 0 16 17"><path d="M4.6 5.8L7.5 9.3L10.4 5.8" fill="none" stroke="#606060" stroke-width="2"/></svg>
<div style="position:absolute;left:587px;top:619px;width:650px;height:16px;background:#f0f0f0"></div>
<div style="position:absolute;left:604px;top:619px;width:508px;height:15px;background:#cdcdcd"></div>
<svg style="position:absolute;left:587px;top:619px" width="17" height="16" viewBox="0 0 17 16"><path d="M10.2 5.1L6.8 8L10.2 10.9" fill="none" stroke="#606060" stroke-width="2"/></svg>
<svg style="position:absolute;left:1204px;top:619px" width="17" height="16" viewBox="0 0 17 16"><path d="M6.8 5.1L10.2 8L6.8 10.9" fill="none" stroke="#606060" stroke-width="2"/></svg>
<div style="position:absolute;left:582px;top:640px;width:51px;height:23px;background:#fff"></div>
<div style="position:absolute;left:633px;top:641px;width:62px;height:21px;box-sizing:border-box;background:#f0f0f0;border:1px solid #d9d9d9;border-top-color:#e3e3e3"></div>
<div class="t" style="left:638px;top:651px;color:#000;font-size:11.7px;font-family:'Liberation Sans', sans-serif;"><span>Messages</span></div>
<div style="position:absolute;left:694px;top:641px;width:76px;height:21px;box-sizing:border-box;background:#f0f0f0;border:1px solid #d9d9d9;border-top-color:#e3e3e3"></div>
<div class="t" style="left:701px;top:651px;color:#000;font-size:11.7px;font-family:'Liberation Sans', sans-serif;"><span>Information</span></div>
<div style="position:absolute;left:769px;top:641px;width:74px;height:21px;box-sizing:border-box;background:#f0f0f0;border:1px solid #d9d9d9;border-top-color:#e3e3e3"></div>
<div class="t" style="left:776px;top:651px;color:#000;font-size:11.7px;font-family:'Liberation Sans', sans-serif;"><span>What's New</span></div>
<div class="t" style="left:590px;top:653px;color:#000;font-size:11.7px;font-family:'Liberation Sans', sans-serif;"><span>View</span></div></body></html>
